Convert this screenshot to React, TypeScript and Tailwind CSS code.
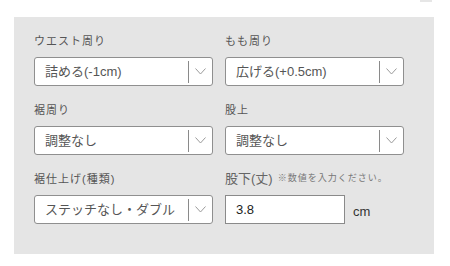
import React from 'react'

const font = { fontFamily: '"Liberation Sans", "Noto Sans CJK JP", sans-serif' }

function Chevron() {
  return (
    <svg width="11" height="7" viewBox="0 0 11 7" className="block">
      <path d="M0.5 0.5 L5.5 6 L10.5 0.5" fill="none" stroke="#9a9a9a" strokeWidth="1" />
    </svg>
  )
}

function Select({ value }: { value: string }) {
  return (
    <div className="flex h-[29px] w-[179px] items-center rounded-[3px] border border-[#8f8f8f] bg-white">
      <span className="flex-1 truncate pl-[10px] text-[13px] text-[#555]">{value}</span>
      <div className="h-[22px] w-px bg-[#8a8a8a]" />
      <div className="flex w-[23px] items-center justify-center">
        <Chevron />
      </div>
    </div>
  )
}

function Label({ children }: { children: React.ReactNode }) {
  return (
    <div className="flex h-4 items-center text-[11px] tracking-[1px] text-[#555]">{children}</div>
  )
}

export default function App() {
  const fields = [
    { label: 'ウエスト周り', value: '詰める(-1cm)' },
    { label: 'もも周り', value: '広げる(+0.5cm)' },
    { label: '裾周り', value: '調整なし' },
    { label: '股上', value: '調整なし' },
    { label: '裾仕上げ(種類)', value: 'ステッチなし・ダブル' },
  ]

  return (
    <div className="h-[266px] w-[450px] bg-white" style={font}>
      <div className="ml-[420px] h-[2px] w-[12px] bg-[#e6e6e6]" />
      <div className="ml-[14px] mt-[15px] h-[237px] w-[420px] bg-[#e5e5e5] pl-5 pt-4">
        <div className="grid w-[370px] grid-cols-[179px_179px] gap-x-3 gap-y-4">
          {fields.map((f) => (
            <div key={f.label} className="flex flex-col gap-2">
              <Label>{f.label}</Label>
              <Select value={f.value} />
            </div>
          ))}
          <div className="flex flex-col gap-2">
            <div className="flex h-4 items-center text-[#666]">
              <span className="text-[13px]">股下(丈)</span>
              <span className="ml-[5px] text-[9px] tracking-[1px] text-[#777]">※数値を入力ください。</span>
            </div>
            <div className="flex items-end gap-2">
              <div className="flex h-[29px] w-[120px] items-center border border-[#8a8a8a] bg-white pl-[10px] text-[13px] text-[#222]">
                3.8
              </div>
              <span className="mb-[3px] text-[13px] text-[#333]">cm</span>
            </div>
          </div>
        </div>
      </div>
    </div>
  )
}
